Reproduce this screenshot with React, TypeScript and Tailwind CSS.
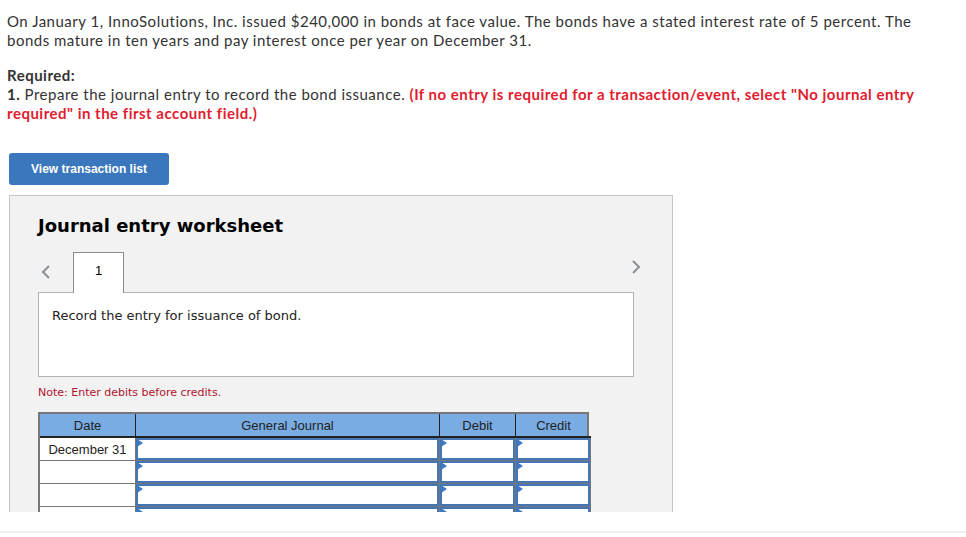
import React from 'react';

const rows = ['December 31', '', '', ''];

function Chevron({ dir }: { dir: 'left' | 'right' }) {
    return (
        <svg width="10" height="16" viewBox="0 0 10 16" className="block">
            {dir === 'left'
                ? <polyline points="8,2 2,8 8,14" fill="none" stroke="#8a8f96" strokeWidth="2" />
                : <polyline points="2,2 8,8 2,14" fill="none" stroke="#8a8f96" strokeWidth="2" />}
        </svg>
    );
}

function EntryCell() {
    return (
        <div className="relative h-full border-r border-b border-[#777] bg-white">
            <div className="absolute inset-0 border-2 border-[#4475b5]" />
            <div className="absolute left-[1px] top-[1px] w-0 h-0 border-t-[4px] border-b-[4px] border-l-[6px] border-t-transparent border-b-transparent border-l-[#3e79c4]" />
        </div>
    );
}

export default function App() {
    return (
        <div className="h-[537px] bg-white overflow-hidden">
            <div className="h-[512px] overflow-hidden">
                <div className="pt-[12px] px-[7px] w-[925px] text-[15px] leading-[19px] tracking-[0.5px] text-[#333] font-['Lato','Liberation_Sans',sans-serif]">
                    <p>On January 1, InnoSolutions, Inc. issued $240,000 in bonds at face value. The bonds have a stated interest rate of 5 percent. The bonds mature in ten years and pay interest once per year on December 31.</p>
                    <p className="mt-[16px] font-bold">Required:</p>
                    <p>
                        <span className="font-bold">1.</span> Prepare the journal entry to record the bond issuance.{' '}
                        <span className="font-bold text-[#e21b2e]">(If no entry is required for a transaction/event, select "No journal entry required" in the first account field.)</span>
                    </p>
                </div>

                <div className="px-[9px] mt-[30px]">
                    <button className="w-[160px] h-[32px] rounded-[3px] bg-[#3a77bc] text-white text-[12px] font-bold font-['Liberation_Sans',Arial,sans-serif]">
                        View transaction list
                    </button>

                    <div className="mt-[10px] w-[664px] h-[400px] border border-[#c6c6c6] bg-[#f2f2f2] pl-[28px] pt-[19px]">
                        <h2 className="text-[18px] leading-[22px] font-bold text-black font-['DejaVu_Sans','Verdana',sans-serif]">Journal entry worksheet</h2>

                        <div className="mt-[14px] w-[603px] flex items-end">
                            <div className="w-[35px] h-[41px] flex items-center pl-[3px]">
                                <Chevron dir="left" />
                            </div>
                            <div className="relative z-10 -mb-px w-[51px] h-[41px] border border-b-0 border-[#8c8c8c] bg-white flex justify-center pt-[8px] text-[13px] font-['Liberation_Sans',Arial,sans-serif] text-black">
                                1
                            </div>
                            <div className="flex-1 h-[41px] flex items-center justify-end pb-[10px]">
                                <Chevron dir="right" />
                            </div>
                        </div>

                        <div className="w-[596px] h-[85px] border border-[#b3b3b3] bg-white pl-[13px] pt-[13px] text-[13px] text-[#222] font-['DejaVu_Sans','Verdana',sans-serif]">
                            Record the entry for issuance of bond.
                        </div>

                        <p className="mt-[9px] text-[11px] leading-[14px] text-[#b0122e] font-['DejaVu_Sans','Verdana',sans-serif]">Note: Enter debits before credits.</p>

                        <div className="mt-[12px] w-[551px] font-['Liberation_Sans',Arial,sans-serif] text-[13px] text-[#222]">
                            <div className="grid grid-cols-[96px_304px_76px_75px] h-[26px] bg-[#79ace3] border-t-2 border-l-2 border-r-2 border-[#777]">
                                <div className="flex items-center justify-center pt-[2px] border-r border-b-2 border-[#222]">Date</div>
                                <div className="flex items-center justify-center pt-[2px] border-r border-b-2 border-[#222]">General Journal</div>
                                <div className="flex items-center justify-center pt-[2px] border-r border-b-2 border-[#222]">Debit</div>
                                <div className="flex items-center justify-center pt-[2px] border-b-2 border-[#222]">Credit</div>
                            </div>
                            {rows.map((d, i) => (
                                <div key={i} className="grid grid-cols-[96px_304px_76px_75px] h-[23px] border-l-2 border-[#777]">
                                    <div className="flex items-center justify-center pt-[2px] border-r border-b border-[#777] bg-white">{d}</div>
                                    <EntryCell />
                                    <EntryCell />
                                    <EntryCell />
                                </div>
                            ))}
                        </div>
                    </div>
                </div>
            </div>
            <div className="mt-[19px] h-[2px] bg-[#f0f0f0]" />
        </div>
    );
}
